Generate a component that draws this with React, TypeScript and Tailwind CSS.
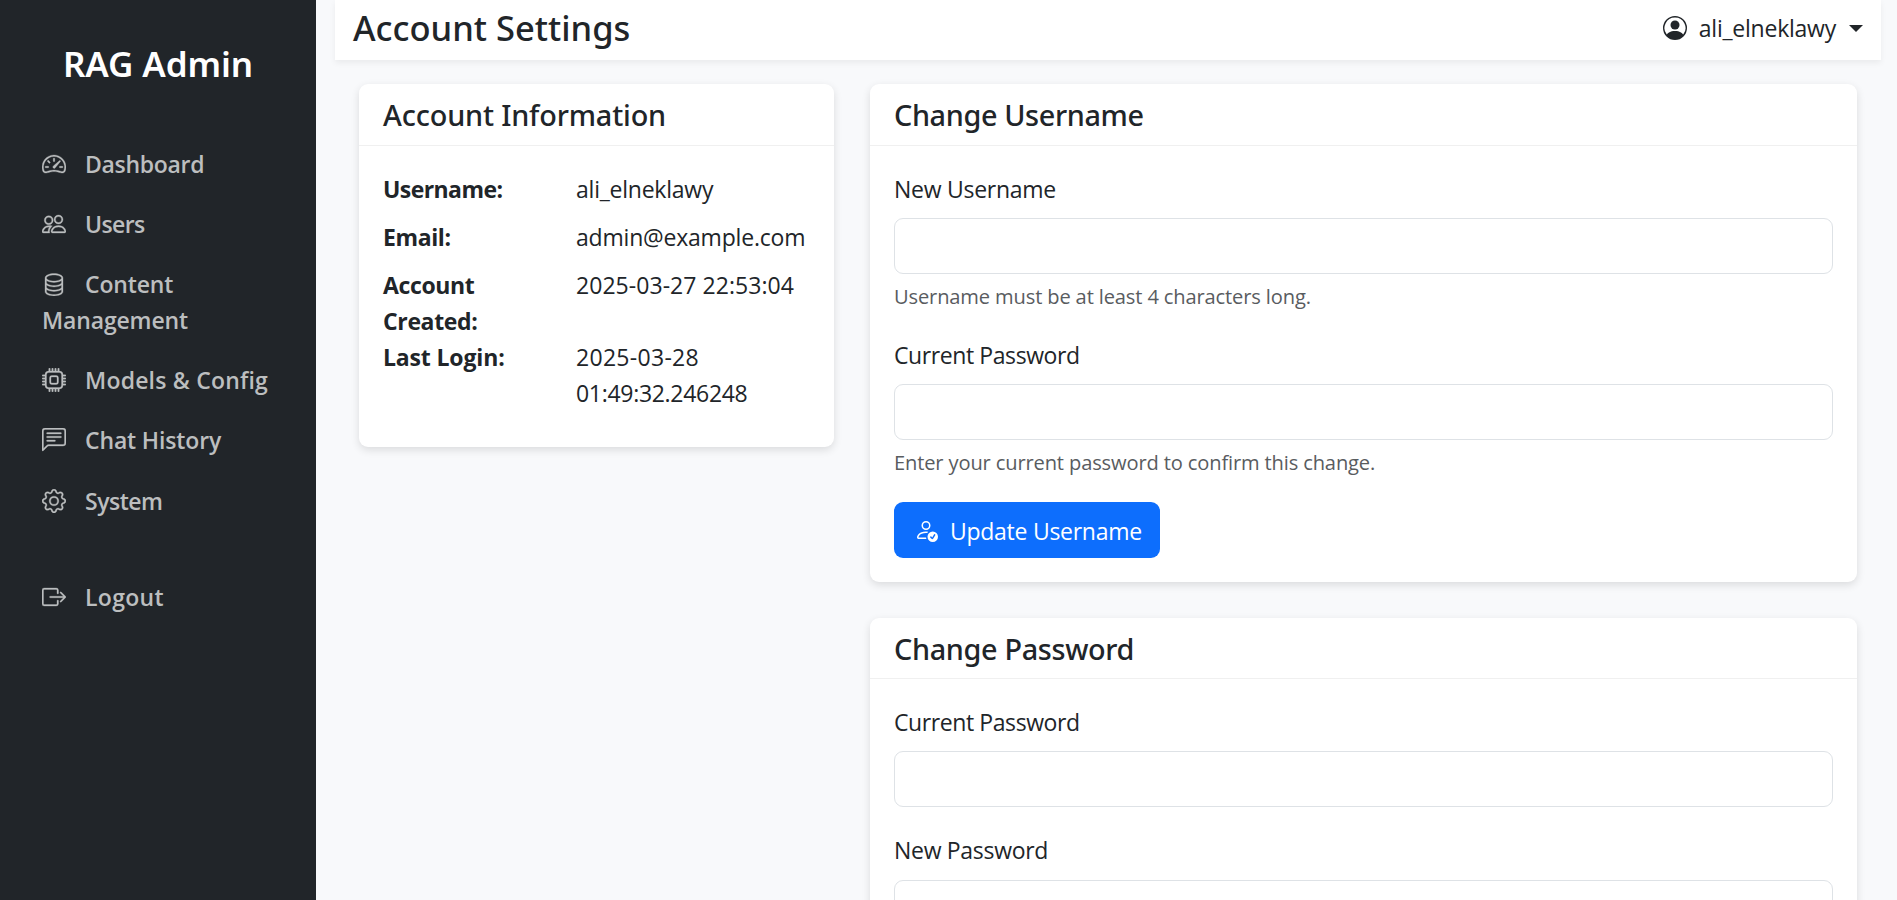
import type { ReactNode } from "react";
import type { IconType } from "react-icons";
import {
  BsBoxArrowRight,
  BsChatLeftText,
  BsCpu,
  BsDatabase,
  BsGear,
  BsPeople,
  BsPersonCheck,
  BsPersonCircle,
  BsSpeedometer2,
} from "react-icons/bs";

type NavItem = { label: string; icon: IconType; tracking: string; className?: string };

const navItems: NavItem[] = [
  { label: "Dashboard", icon: BsSpeedometer2, tracking: "tracking-[-0.3px]" },
  { label: "Users", icon: BsPeople, tracking: "tracking-[-0.6px]" },
  { label: "Content Management", icon: BsDatabase, tracking: "tracking-[-0.15px]" },
  { label: "Models & Config", icon: BsCpu, tracking: "tracking-[0.2px]" },
  { label: "Chat History", icon: BsChatLeftText, tracking: "tracking-[-0.15px]" },
  { label: "System", icon: BsGear, tracking: "tracking-[-0.5px]", className: "mt-px" },
  { label: "Logout", icon: BsBoxArrowRight, tracking: "tracking-[0.3px]", className: "mt-9" },
];

const details = [
  { term: "Username:", lines: ["ali_elneklawy"], termTracking: "tracking-[-0.57px]", tracking: ["tracking-[-0.23px]"] },
  { term: "Email:", lines: ["admin@example.com"], termTracking: "tracking-[-0.4px]", tracking: ["tracking-[-0.2px]"] },
  { term: "Account Created:", lines: ["2025-03-27 22:53:04"], termTracking: "tracking-[-0.36px]", tracking: ["tracking-[0.05px]"] },
  { term: "Last Login:", lines: ["2025-03-28", "01:49:32.246248"], termTracking: "tracking-[-0.15px]", tracking: ["tracking-[0.3px]", "tracking-[-0.3px]"] },
];

function Card({ title, titleClass, headerClass = "h-[62px]", className = "", children }: {
  title: string;
  titleClass: string;
  headerClass?: string;
  className?: string;
  children: ReactNode;
}) {
  return (
    <section className={`rounded-[9px] bg-white shadow-[0_3px_8px_rgba(0,0,0,0.12)] ${className}`}>
      <header className={`border-b border-[#f0f0f0] px-6 pt-[13px] ${headerClass}`}>
        <h2 className={`font-['Noto_Sans',sans-serif] text-[28.8px] leading-9 font-medium ${titleClass}`}>{title}</h2>
      </header>
      {children}
    </section>
  );
}

function Field({ label, tracking, help, inputClass = "mt-[11px]" }: {
  label: string;
  tracking: string;
  help?: string;
  inputClass?: string;
}) {
  return (
    <div>
      <label className={`block pt-px text-[23px] leading-9 ${tracking}`}>{label}</label>
      <input className={`block h-14 w-full rounded-[9px] border border-[#dee2e6] bg-white px-4 outline-none ${inputClass}`} />
      {help && <p className="mt-[7px] h-[31px] text-[20.1px] leading-[31px] tracking-[-0.14px] text-[#595c5f]">{help}</p>}
    </div>
  );
}

export default function App() {
  return (
    <div className="flex h-screen overflow-hidden bg-[#f8f9fb] font-['Open_Sans','Noto_Sans',sans-serif] text-[#212529]">
      <aside className="w-[316px] shrink-0 bg-[#212529]">
        <h1 className="pt-[42px] text-center font-['Noto_Sans',sans-serif] text-[35px] leading-[43px] font-semibold tracking-[-0.1px] text-white">
          RAG Admin
        </h1>
        <nav className="flex flex-col gap-6 pt-[61px] pr-[41px] pl-[42px]">
          {navItems.map(({ label, icon: Icon, tracking, className = "" }) => (
            <a key={label} className={`block text-[23px] leading-9 font-semibold text-[#bcbebf] ${tracking} ${className}`}>
              <Icon className="mr-[19px] inline-block size-6 stroke-current stroke-[0.2] align-[-3px]" />
              {label}
            </a>
          ))}
        </nav>
      </aside>

      <main className="flex min-w-0 flex-1 flex-col pr-4 pl-[19px]">
        <header className="flex h-15 shrink-0 items-start justify-between bg-white pr-[18px] pl-[18px] shadow-[0_3px_6px_rgba(0,0,0,0.06)]">
          <h1 className="pt-[6px] font-['Noto_Sans',sans-serif] text-[34.5px] leading-[43px] font-medium">Account Settings</h1>
          <div className="flex items-center pt-[10px] text-[23px] leading-9">
            <BsPersonCircle className="mr-3 size-6" />
            <span className="tracking-[-0.23px]">ali_elneklawy</span>
            <span className="ml-[13px] h-0 w-0 border-x-[7px] border-t-[7px] border-x-transparent border-t-[#212529]" />
          </div>
        </header>

        <div className="flex items-start gap-9 px-6 pt-6">
          <Card title="Account Information" titleClass="tracking-[-0.15px]" className="w-[475px] shrink-0">
            <dl className="px-6 pt-[25px] pb-6 text-[23px] leading-9">
              {details.map((d) => (
                <div key={d.term} className="flex items-start">
                  <dt className={`w-[193px] shrink-0 pr-9 font-bold ${d.termTracking}`}>{d.term}</dt>
                  <dd className="pb-3">
                    {d.lines.map((line, i) => (
                      <span key={line} className={`block whitespace-nowrap ${d.tracking[i]}`}>{line}</span>
                    ))}
                  </dd>
                </div>
              ))}
            </dl>
          </Card>

          <div className="flex min-w-0 flex-1 flex-col gap-9">
            <Card title="Change Username" titleClass="tracking-[-0.36px]">
              <form className="flex flex-col px-6 pt-6 pb-6">
                <Field label="New Username" tracking="tracking-[-0.27px]" help="Username must be at least 4 characters long." />
                <div className="h-6" />
                <Field label="Current Password" tracking="tracking-[-0.41px]" help="Enter your current password to confirm this change." />
                <button type="button" className="mt-6 flex h-14 w-[266px] items-center rounded-[9px] bg-[#0d6efd] pt-px pl-[20px] text-[23px] text-white">
                  <BsPersonCheck className="mr-3 mb-px size-6" />
                  <span className="pt-px tracking-[-0.27px] whitespace-nowrap">Update Username</span>
                </button>
              </form>
            </Card>
            <Card title="Change Password" titleClass="tracking-[-0.33px]" headerClass="h-[61px]">
              <form className="flex flex-col gap-6 px-6 pt-6 pb-6">
                <Field label="Current Password" tracking="tracking-[-0.41px]" />
                <Field label="New Password" tracking="tracking-[-0.3px]" inputClass="mt-3" />
              </form>
            </Card>
          </div>
        </div>
      </main>
    </div>
  );
}
